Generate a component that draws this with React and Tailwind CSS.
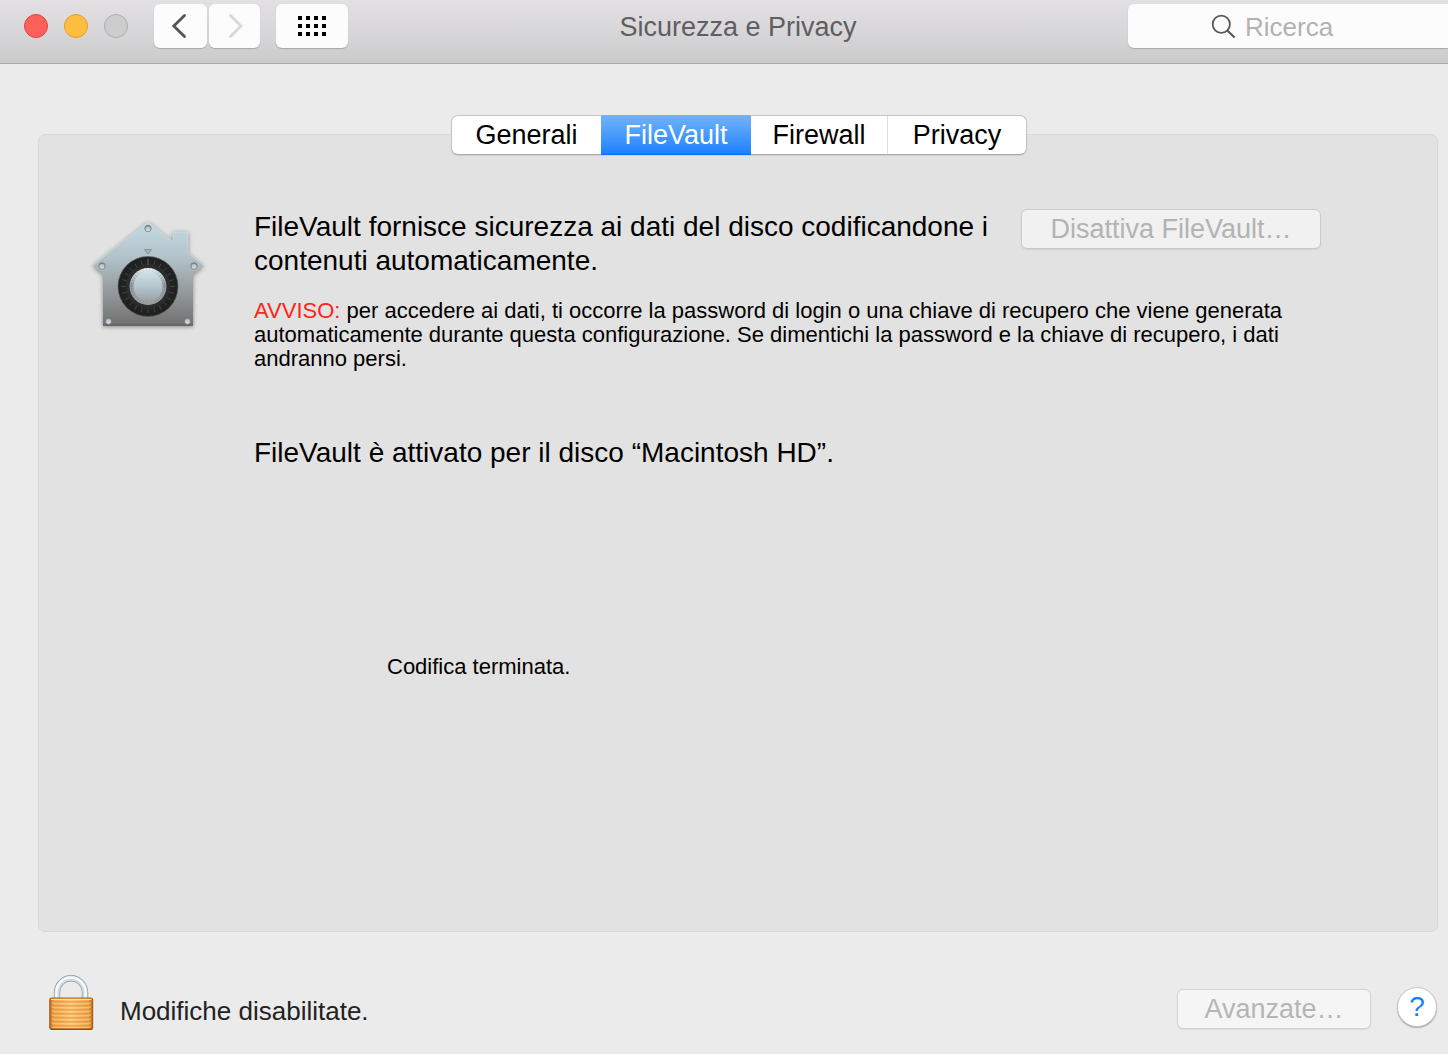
import React from "react";

const FONT = "font-['Liberation_Sans',Arial,sans-serif]";

function Toolbar() {
  return (
    <header className="flex h-16 items-start border-b border-[#a9a8a9] bg-linear-to-b from-[#e3e1e4] to-[#cccbcc] pt-1 pl-6">
      <div className="flex h-11 items-center gap-4">
        <button aria-label="Chiudi" className="size-6 rounded-full border border-[#e2443f] bg-[#fe605c]" />
        <button aria-label="Riduci" className="size-6 rounded-full border border-[#dfa023] bg-[#ffbe3f]" />
        <button aria-label="Ingrandisci" disabled className="size-6 rounded-full border border-[#adadad] bg-[#cdcdcd]" />
      </div>
      <nav className="ml-[26px] flex h-11 gap-0.5">
        <button aria-label="Indietro" className="flex w-[53px] items-center justify-center rounded-md bg-[#fcfcfc] shadow-[0_1px_1px_#a9a9a9]">
          <svg width="20" height="26" viewBox="0 0 20 26" fill="none" stroke="#545454" strokeWidth="2.8" strokeLinecap="round" strokeLinejoin="miter">
            <path d="M13.500 2.500 2.800 13 13.500 23.500" />
          </svg>
        </button>
        <button aria-label="Avanti" disabled className="flex w-[51px] items-center justify-center rounded-md bg-[#fcfcfc] shadow-[0_1px_1px_#a9a9a9]">
          <svg width="20" height="26" viewBox="0 0 20 26" fill="none" stroke="#d8d8d8" strokeWidth="2.8" strokeLinecap="round" strokeLinejoin="miter">
            <path d="M5.500 2.500 16 13 5.500 23.500" />
          </svg>
        </button>
      </nav>
      <button aria-label="Mostra tutte" className="ml-4 flex h-11 w-[72px] items-center justify-center rounded-md bg-[#fcfcfc] shadow-[0_1px_1px_#a9a9a9]">
        <svg width="28" height="20" viewBox="0 0 28 20" fill="#000" shapeRendering="crispEdges">
          {[0, 8, 16].map((y) => [0, 8, 16, 24].map((x) => <rect key={`${x}-${y}`} x={x} y={y} width="4" height="4" />))}
        </svg>
      </button>
      <h1 className="flex h-[46px] flex-1 items-center justify-center text-[27px] text-[#5f5e60]">Sicurezza e Privacy</h1>
      <label className="-mr-1 flex h-11 w-[324px] shrink-0 items-center rounded-md bg-[#fcfcfc] pt-0.5 pl-[83px] shadow-[0_1px_1px_#a9a9a9]">
        <svg width="26" height="26" viewBox="0 0 26 26" fill="none" stroke="#58585a" strokeWidth="1.8">
          <circle cx="10.3" cy="10.2" r="8.6" />
          <path d="m16.3 16.5 7.3 7" strokeWidth="2.2" />
        </svg>
        <input type="text" aria-label="Ricerca" placeholder="Ricerca" className="ml-2 w-40 bg-transparent text-[26px] outline-none placeholder:text-[#b2b2b2]" />
      </label>
    </header>
  );
}

function Tabs() {
  return (
    <div role="tablist" className="-mt-5 ml-0.5 flex h-10 rounded-[7px] border border-[#c3c3c3] border-b-[#a9a9a9] bg-white text-[27px] leading-[38px] text-black shadow-[0_1px_1px_#d2d2d2]">
      <button role="tab" aria-selected="false" className="w-[149px]">Generali</button>
      <button role="tab" aria-selected="true" className="-my-px w-[150px] border-b border-[#1067f4] bg-linear-to-b from-[#6fb4f8] to-[#1880fe] text-white">FileVault</button>
      <button role="tab" aria-selected="false" className="w-[137px] border-r border-[#dedede]">Firewall</button>
      <button role="tab" aria-selected="false" className="w-[138px]">Privacy</button>
    </div>
  );
}

function HouseVault() {
  const bolts = [[41, 8.5], [-5, 46], [87, 46], [1.5, 101], [80.5, 101]];
  return (
    <svg width="116" height="116" viewBox="-17 -3 116 116" className="drop-shadow-[0_1px_2px_#00000066]" role="img" aria-label="FileVault">
      <defs>
        <linearGradient id="house" x1="0" y1="0" x2="0" y2="1">
          <stop offset="0" stopColor="#c5dbe4" />
          <stop offset=".35" stopColor="#b1c1c8" />
          <stop offset=".7" stopColor="#929799" />
          <stop offset="1" stopColor="#716f6f" />
        </linearGradient>
        <linearGradient id="knobRim" x1="0" y1="0" x2="0" y2="1">
          <stop offset="0" stopColor="#f4f8fa" />
          <stop offset=".45" stopColor="#8e9a9f" />
          <stop offset="1" stopColor="#a4a4a4" />
        </linearGradient>
        <linearGradient id="knob" x1="0" y1="0" x2="0" y2="1">
          <stop offset="0" stopColor="#cfe1e9" />
          <stop offset=".5" stopColor="#b4c5cd" />
          <stop offset="1" stopColor="#9ba3a7" />
        </linearGradient>
        <linearGradient id="bolt" x1="0" y1="0" x2="0" y2="1">
          <stop offset="0" stopColor="#7d8487" />
          <stop offset="1" stopColor="#f4f6f7" />
        </linearGradient>
      </defs>
      <path d="M41 2 66 21.5V12H81V33L96.500 45.500 86 55V105.500H-4V55L-14 45.500Z" fill="url(#house)" />
      <path d="m-14 45.500 55-43.500 25 19.500V12h15v21l15.500 12.500" fill="none" stroke="#d0e1e9" strokeWidth=".6" />
      <path d="M-4 105.200h90" stroke="#5b5858" strokeWidth="1" />
      {bolts.map(([x, y]) => (
        <g key={`${x}-${y}`}>
          <circle cx={x} cy={y} r="3.200" fill="url(#bolt)" stroke="#6d7679" strokeWidth=".8" />
          <circle cx={x} cy={y - 0.3} r="1.500" fill="#c4d0d5" />
        </g>
      ))}
      <path d="M37.500 29.500h7L41 34Z" fill="#a4b5bc" stroke="#7d8c92" strokeWidth=".8" />
      <circle cx="41" cy="66.500" r="30" fill="#202121" stroke="#555a5c" strokeWidth=".7" />
      <circle cx="41" cy="66.500" r="22.500" fill="#2b2c2c" />
      {Array.from({ length: 24 }, (_, i) => (
        <path key={i} d={i === 0 ? "M41 39v6" : "M41 40v4"} stroke="#5c5c5c" strokeWidth={i === 0 ? "1.2" : ".6"} transform={`rotate(${i * 15} 41 66.5)`} />
      ))}
      <circle cx="41" cy="66.500" r="18.500" fill="url(#knobRim)" />
      <circle cx="41" cy="66.500" r="16.500" fill="none" stroke="#555" strokeOpacity=".14" strokeWidth="3" strokeDasharray="1.5 1.5" />
      <circle cx="41" cy="66.500" r="14.500" fill="url(#knob)" />
    </svg>
  );
}

function Padlock() {
  return (
    <svg width="46" height="58" viewBox="0 0 46 58" role="img" aria-label="Bloccato">
      <defs>
        <linearGradient id="brass" x1="0" y1="0" x2="1" y2="0">
          <stop offset="0" stopColor="#b56618" />
          <stop offset=".1" stopColor="#f0a64b" />
          <stop offset=".5" stopColor="#fdc878" />
          <stop offset=".9" stopColor="#f0a64b" />
          <stop offset="1" stopColor="#b56618" />
        </linearGradient>
      </defs>
      <path d="M9 27V18.500a14 14.300 0 0 1 28 0V27" fill="none" stroke="#919da3" strokeWidth="6.400" />
      <path d="M9 27V18.500a14 14.300 0 0 1 28 0V27" fill="none" stroke="#cfdae1" strokeWidth="5" />
      <path d="M8.400 27V18.500a14.600 14.900 0 0 1 29.200 0V27" fill="none" stroke="#f8fbfd" strokeWidth="2.400" />
      <rect x="1.800" y="24" width="42.800" height="31.500" rx="2" fill="url(#brass)" stroke="#a5601f" strokeWidth="1.200" />
      <path d="M3 25.500h40.500" stroke="#ffe6a6" strokeWidth="1.200" />
      {[28, 32, 36, 40, 44, 48, 52].map((y) => (
        <g key={y}>
          <path d={`M2.500 ${y}h41.500`} stroke="#dd9039" strokeWidth="1.200" />
          <path d={`M3.500 ${y + 1.3}h39.500`} stroke="#ffd690" strokeWidth=".6" />
        </g>
      ))}
      <path d="M3 55.200h40.500" stroke="#8c4714" strokeWidth="1.200" />
    </svg>
  );
}

export default function App() {
  return (
    <div className={`flex min-h-screen flex-col overflow-hidden bg-[#ebebeb] ${FONT}`}>
      <Toolbar />
      <main className="mt-[70px] mr-2.5 ml-[38px] flex flex-1 flex-col items-center rounded-[7px] border border-[#d9d9d9] bg-[#e2e2e2] text-black">
        <Tabs />
        <div className="flex w-full items-start pt-[54px] pl-[51px]">
          <div className="mt-2 w-[164px] shrink-0">
            <HouseVault />
          </div>
          <div className="min-w-0 flex-1">
            <div className="flex items-start">
              <p className="w-[767px] pt-px text-[28px] leading-[34px]">
                FileVault fornisce sicurezza ai dati del disco codificandone i<br />
                contenuti automaticamente.
              </p>
              <button disabled className="h-10 w-[300px] shrink-0 rounded-md border border-[#cbcbcb] bg-[#f1f1f1] text-[27px] leading-9 whitespace-nowrap text-[#b3b3b3] shadow-[0_1px_1px_#d2d2d2]">
                Disattiva FileVault…
              </button>
            </div>
            <p className="mt-[21px] text-[22px] leading-6">
              <span className="text-[#ff2419]">AVVISO:</span> per accedere ai dati, ti occorre la password di login o una chiave di recupero che viene generata<br />
              automaticamente durante questa configurazione. Se dimentichi la password e la chiave di recupero, i dati<br />
              andranno persi.
            </p>
            <p className="mt-[65px] text-[28px] leading-[34px]">FileVault è attivato per il disco “Macintosh HD”.</p>
            <p role="status" className="mt-[185px] ml-[133px] text-[22px] leading-6">Codifica terminata.</p>
          </div>
        </div>
      </main>
      <footer className="mt-[42px] flex h-20 items-start pr-[11px] pl-12">
        <Padlock />
        <span className="mt-5 ml-[26px] text-[26px] leading-[34px] text-[#222]">Modifiche disabilitate.</span>
        <button disabled className="mt-[15px] ml-auto h-10 w-[194px] rounded-md border border-[#d2d2d2] bg-[#f5f5f5] text-[27px] leading-9 text-[#b5b5b5] shadow-[0_1px_1px_#dadada]">Avanzate…</button>
        <button aria-label="Aiuto" className="mt-[13px] ml-[26px] size-10 rounded-full border border-[#c6c6c6] bg-white text-[28px] leading-9 text-[#147efb] shadow-[0_1px_1px_#aaa]">?</button>
      </footer>
    </div>
  );
}
